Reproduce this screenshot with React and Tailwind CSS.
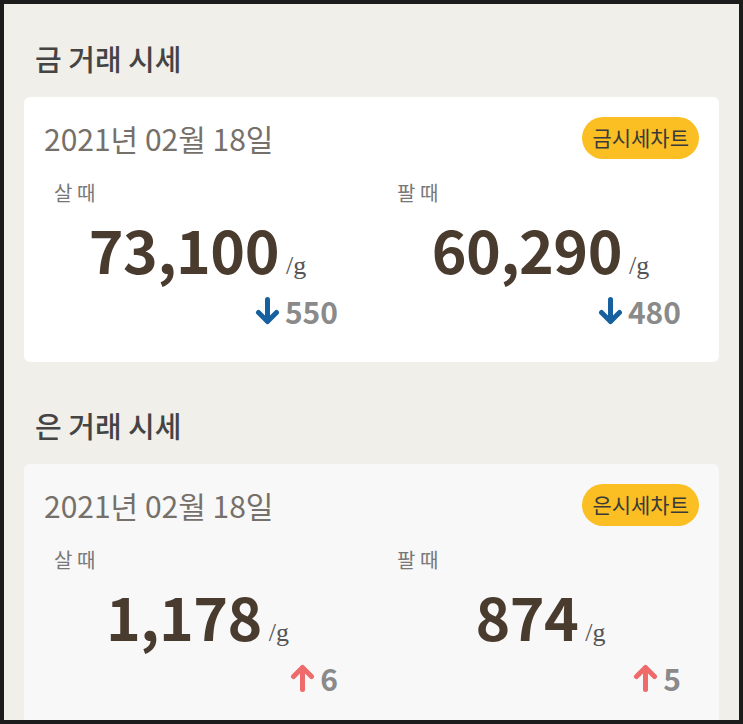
import React from "react";

const KR = { fontFamily: '"Noto Sans CJK KR", "Noto Sans", sans-serif' };
const SERIF = { fontFamily: '"Liberation Serif", "DejaVu Serif", serif' };

function Arrow({ up }) {
  return (
    <svg width="25" height="28" viewBox="0 0 25 28" className={up ? "text-[#ef6b6b]" : "text-[#17609f]"}>
      {up ? (
        <g fill="none" stroke="currentColor" strokeWidth="5" strokeLinecap="round" strokeLinejoin="round">
          <line x1="12.5" y1="4" x2="12.5" y2="25.5" />
          <polyline points="3.5,12.5 12.5,3.5 21.5,12.5" />
        </g>
      ) : (
        <g fill="none" stroke="currentColor" strokeWidth="5" strokeLinecap="round" strokeLinejoin="round">
          <line x1="12.5" y1="2.5" x2="12.5" y2="24" />
          <polyline points="3.5,15.5 12.5,24.5 21.5,15.5" />
        </g>
      )}
    </svg>
  );
}

function Col({ label, value, delta, up }) {
  return (
    <div className="flex flex-col">
      <div className="text-[20px] leading-[26px] text-[#777777]">{label}</div>
      <div className="mt-[13px] flex items-baseline justify-center">
        <span className="text-[59px] leading-[60px] font-bold text-[#4a3b2f] tracking-[-0.5px]">{value}</span>
        <span className="ml-[7px] text-[26px] text-[#555555]" style={SERIF}>/g</span>
      </div>
      <div className="mt-[8px] flex items-center justify-end pr-[3px] h-[36px]">
        <Arrow up={up} />
        <span className="ml-[5px] text-[30px] leading-[36px] font-bold text-[#8a8a8a]">{delta}</span>
      </div>
    </div>
  );
}

function Card({ bg, chart, buy, sell }) {
  return (
    <div className={`rounded-[6px] ${bg} px-[20px] pt-[20px] pb-[33px]`}>
      <div className="flex items-center justify-between h-[42px]">
        <div className="text-[30px] text-[#76706a]">2021년 02월 18일</div>
        <div className="h-[42px] rounded-full bg-[#fbbf24] px-[10px] flex items-center text-[21px] text-[#3a3a3a]">
          {chart}
        </div>
      </div>
      <div className="mt-[21px] pl-[10px] grid grid-cols-[287px_287px] gap-x-[56px]">
        <Col label="살 때" {...buy} />
        <Col label="팔 때" {...sell} />
      </div>
    </div>
  );
}

export default function App() {
  return (
    <div
      className="w-[743px] h-[724px] overflow-hidden border-4 border-[#1c1c1c] bg-[#f0efea]"
      style={KR}
    >
      <div className="px-[20px] pt-[34px]">
        <h2 className="pl-[11px] text-[29px] leading-[40px] font-medium text-[#444444]">금 거래 시세</h2>
        <div className="mt-[19px]">
          <Card
            bg="bg-white"
            chart="금시세차트"
            buy={{ value: "73,100", delta: "550", up: false }}
            sell={{ value: "60,290", delta: "480", up: false }}
          />
        </div>
        <h2 className="mt-[43px] pl-[11px] text-[29px] leading-[40px] font-medium text-[#444444]">은 거래 시세</h2>
        <div className="mt-[19px]">
          <Card
            bg="bg-[#f8f8f8]"
            chart="은시세차트"
            buy={{ value: "1,178", delta: "6", up: true }}
            sell={{ value: "874", delta: "5", up: true }}
          />
        </div>
      </div>
    </div>
  );
}
